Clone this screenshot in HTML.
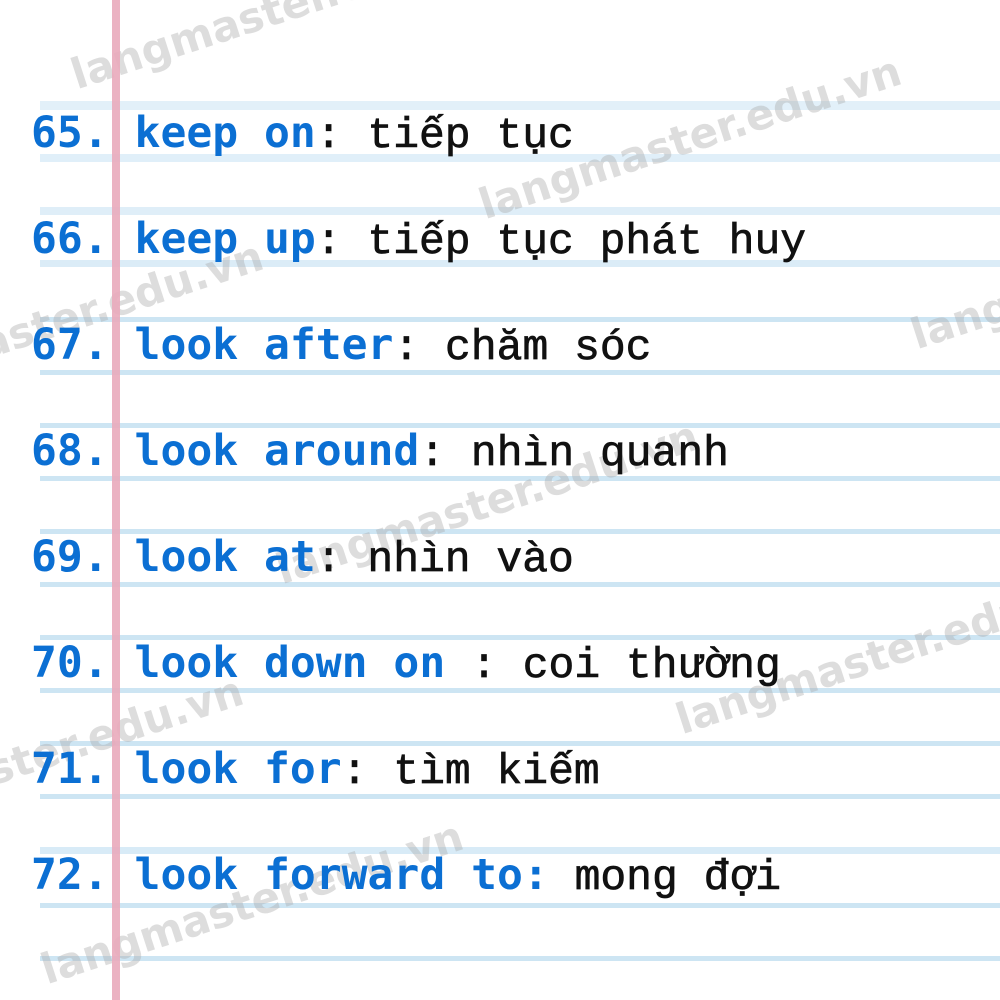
<!DOCTYPE html>
<html><head><meta charset="utf-8"><style>
html,body{margin:0;padding:0;width:1000px;height:1000px;overflow:hidden}
body{background:#fff}
#wrap{position:relative;width:1000px;height:1000px;overflow:hidden;font-family:"DejaVu Sans Mono","Liberation Mono",monospace}
.band{position:absolute;left:40px;right:0;background:#d6eaf6}
.margin{position:absolute;left:112px;width:8px;top:0;height:1000px;background:#e9aabb;opacity:.9}
.wm{position:absolute;font-family:"DejaVu Sans","Liberation Sans",sans-serif;font-weight:bold;font-size:42px;color:rgba(170,170,170,.4);transform:rotate(-18deg);transform-origin:0 100%;white-space:nowrap}
.row{position:absolute;left:31px;font-size:43px;line-height:50px;white-space:pre;color:#111}
.row b{color:#0b6fd3}
.row span{font-family:"Liberation Mono",monospace;-webkit-text-stroke:0.7px #111}
</style></head><body><div id="wrap">
<div class="band" style="top:101px;height:9px;background:#e2f0f9"></div>
<div class="band" style="top:154px;height:8px;background:#e0eff9"></div>
<div class="band" style="top:207px;height:8px;background:#dfeef8"></div>
<div class="band" style="top:260px;height:7px;background:#dbecf7"></div>
<div class="band" style="top:317px;height:5px;background:#cde5f3"></div>
<div class="band" style="top:370px;height:5px;background:#cde5f3"></div>
<div class="band" style="top:423px;height:5px;background:#cde5f3"></div>
<div class="band" style="top:476px;height:5px;background:#cde5f3"></div>
<div class="band" style="top:529px;height:5px;background:#cde5f3"></div>
<div class="band" style="top:582px;height:5px;background:#cde5f3"></div>
<div class="band" style="top:635px;height:5px;background:#cde5f3"></div>
<div class="band" style="top:688px;height:5px;background:#cde5f3"></div>
<div class="band" style="top:741px;height:5px;background:#cde5f3"></div>
<div class="band" style="top:794px;height:5px;background:#cde5f3"></div>
<div class="band" style="top:847px;height:7px;background:#d8ebf7"></div>
<div class="band" style="top:903px;height:5px;background:#cde5f3"></div>
<div class="band" style="top:956px;height:5px;background:#cde5f3"></div>

<div class="wm" style="left:80px;top:50px">langmaster.edu.vn</div>
<div class="wm" style="left:488px;top:180px">langmaster.edu.vn</div>
<div class="wm" style="left:920px;top:310px">langmaster.edu.vn</div>
<div class="wm" style="left:-150px;top:365px">langmaster.edu.vn</div>
<div class="wm" style="left:285px;top:545px">langmaster.edu.vn</div>
<div class="wm" style="left:685px;top:695px">langmaster.edu.vn</div>
<div class="wm" style="left:50px;top:945px">langmaster.edu.vn</div>
<div class="wm" style="left:-170px;top:800px">langmaster.edu.vn</div>

<div class="margin"></div>

<div class="row" style="top:108px"><b>65. keep on</b><span>: tiếp tục</span></div>
<div class="row" style="top:214px"><b>66. keep up</b><span>: tiếp tục phát huy</span></div>
<div class="row" style="top:320px"><b>67. look after</b><span>: chăm sóc</span></div>
<div class="row" style="top:426px"><b>68. look around</b><span>: nhìn quanh</span></div>
<div class="row" style="top:532px"><b>69. look at</b><span>: nhìn vào</span></div>
<div class="row" style="top:638px"><b>70. look down on </b><span>: coi thường</span></div>
<div class="row" style="top:744px"><b>71. look for</b><span>: tìm kiếm</span></div>
<div class="row" style="top:850px"><b>72. look forward to:</b><span> mong đợi</span></div>
</div></body></html>
